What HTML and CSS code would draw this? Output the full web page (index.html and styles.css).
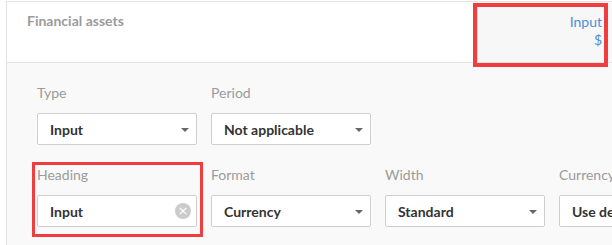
FILE: index.html
```html
<!DOCTYPE html>
<html lang="en">
<head>
<meta charset="UTF-8" />
<title>Financial assets</title>
<link rel="stylesheet" href="styles.css">
</head>
<body>
  <div class="sheet">
    <div class="sheet-head">
      <div class="sheet-title">Financial assets</div>
      <div class="sheet-col">
        <span>Input</span>
        <span>$</span>
      </div>
    </div>
    <div class="sheet-body">
      <div class="field-row">
        <div class="field">
          <label for="type">Type</label>
          <div class="select">
            <select id="type"><option>Input</option></select>
          </div>
        </div>
        <div class="field">
          <label for="period">Period</label>
          <div class="select">
            <select id="period"><option>Not applicable</option></select>
          </div>
        </div>
      </div>
      <div class="field-row">
        <div class="field">
          <label for="heading">Heading</label>
          <div class="text-box">
            <input type="text" id="heading" value="Input">
            <button class="clear" type="button">&times;</button>
          </div>
        </div>
        <div class="field">
          <label for="format">Format</label>
          <div class="select">
            <select id="format"><option>Currency</option></select>
          </div>
        </div>
        <div class="field">
          <label for="width">Width</label>
          <div class="select">
            <select id="width"><option>Standard</option></select>
          </div>
        </div>
        <div class="field">
          <label for="currency">Currency</label>
          <div class="select">
            <select id="currency"><option>Use default</option></select>
          </div>
        </div>
      </div>
    </div>
  </div>

  <!-- marcações em vermelho -->
  <div class="mark mark-col"></div>
  <div class="mark mark-heading"></div>
</body>
</html>
```

FILE: styles.css
```css
html, body {
  height: 100%;
}
body {
  margin: 0;
  font-family: Lato, "Open Sans", sans-serif;
  font-size: 14px;
  background: #fff;
  overflow: hidden;
}
.sheet {
  margin: 1px 0 0 6px;
  border-top: 1px solid #e3e3e3;
  border-left: 1px solid #e3e3e3;
  height: calc(100% - 2px);
  display: flex;
  flex-direction: column;
}
.sheet-head {
  display: flex;
  height: 61px;
  box-sizing: border-box;
  border-bottom: 1px solid #e3e3e3;
  background: #fff;
}
.sheet-title {
  flex: 1;
  padding: 9px 0 0 20px;
  line-height: 20px;
  font-weight: 700;
  color: #9b9b9b;
}
.sheet-col {
  width: 135px;
  box-sizing: border-box;
  border-left: 1px solid #e3e3e3;
  background: #f7f7f7;
  padding: 11px 10px 0 0;
  display: flex;
  flex-direction: column;
  align-items: flex-end;
  line-height: 18px;
  color: #4a8fdc;
}
.sheet-body {
  flex: 1;
  background: #f9f9f9;
  padding: 20px 0 0 30px;
  overflow: hidden;
}
.field-row {
  display: flex;
  gap: 14px;
  margin-bottom: 20px;
}
.field {
  width: 160px;
  flex-shrink: 0;
}
.field label {
  display: block;
  line-height: 20px;
  color: #9b9b9b;
  margin-bottom: 10px;
}
.select, .text-box {
  position: relative;
  height: 32px;
}
.select select, .text-box input {
  appearance: none;
  -webkit-appearance: none;
  width: 100%;
  height: 32px;
  box-sizing: border-box;
  margin: 0;
  padding: 0 24px 0 12px;
  border: 1px solid #cfcfcf;
  border-radius: 2px;
  background: #fff;
  font-family: inherit;
  font-size: 14px;
  font-weight: 700;
  color: #333;
  outline: none;
}
.select::after {
  content: "";
  position: absolute;
  right: 8px;
  top: 15px;
  border-left: 4px solid transparent;
  border-right: 4px solid transparent;
  border-top: 4px solid #666;
}
.clear {
  position: absolute;
  right: 6px;
  top: 8px;
  width: 16px;
  height: 16px;
  padding: 0;
  border: none;
  border-radius: 50%;
  background: #cbcbcb;
  color: #fff;
  font-family: "DejaVu Sans", sans-serif;
  font-size: 13px;
  line-height: 16px;
  text-align: center;
  cursor: pointer;
}
.mark {
  position: absolute;
  border: 4px solid #f03e3e;
  box-sizing: border-box;
}
.mark-col {
  left: 473px;
  top: 3px;
  width: 135px;
  height: 64px;
}
.mark-heading {
  left: 32px;
  top: 162px;
  width: 171px;
  height: 75px;
  border-width: 3px;
}
```
